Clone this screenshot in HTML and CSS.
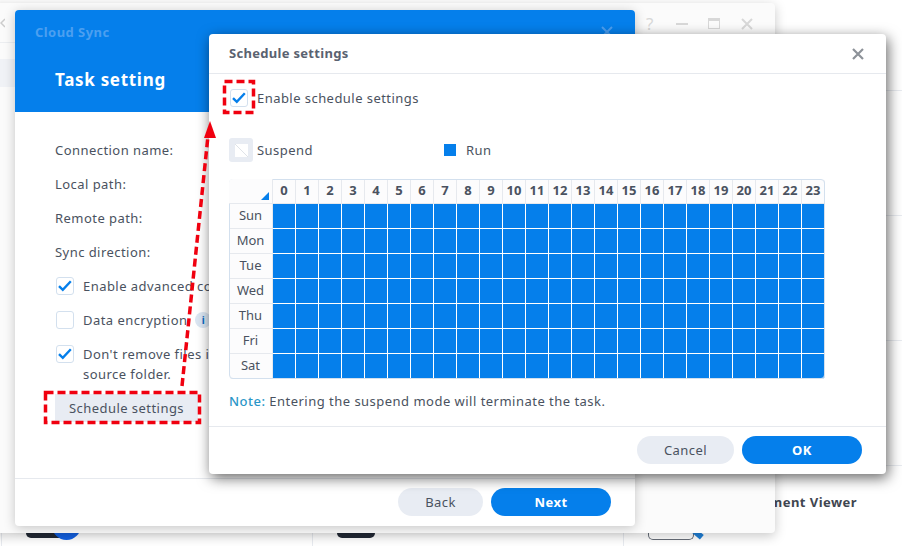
FILE: index.html
```html
<!DOCTYPE html>
<html lang="en">
<head>
    <meta charset="UTF-8">
    <title>Cloud Sync - Schedule settings</title>
    <link rel="stylesheet" href="styles.css">
</head>
<body>
    <div class="desktop">
        <div class="desk-line line-one"></div>
        <div class="desk-line line-two"></div>
        <div class="desk-line line-three"></div>
        <div class="desk-line line-four"></div>
        <div class="desk-line line-bottom"></div>
        <div class="desk-cols">
            <span></span><span></span><span></span>
        </div>
        <div class="desk-title">Document Viewer</div>
        <div class="desk-app app-one"><span class="blue-dot"></span></div>
        <div class="desk-app app-two"></div>
        <div class="desk-app app-three"></div>
        <div class="pencil"></div>

        <div class="back-window">
            <div class="back-head">
                <svg width="12" height="12" viewBox="0 0 12 12"><path d="M12 2L8 6l4 4" fill="none" stroke="#ccc" stroke-width="1.5"/></svg>
                <div class="back-tools">
                    <span class="tool-help">?</span>
                    <span class="tool-min"></span>
                    <span class="tool-max"></span>
                    <svg width="14" height="14" viewBox="0 0 14 14"><path d="M2 2l10 10M12 2L2 12" stroke="#d8d8d8" stroke-width="2"/></svg>
                </div>
            </div>
            <div class="back-row"></div>
        </div>

        <div class="task-dialog">
            <div class="task-head">
                <div class="task-title-row">
                    <span class="task-app">Cloud Sync</span>
                    <svg width="12" height="12" viewBox="0 0 12 12"><path d="M1 1l10 10M11 1L1 11" stroke="#4c9ff0" stroke-width="2"/></svg>
                </div>
                <h1>Task setting</h1>
            </div>
            <div class="task-body">
                <div class="field">Connection name:</div>
                <div class="field">Local path:</div>
                <div class="field">Remote path:</div>
                <div class="field">Sync direction:</div>
                <div class="check-row">
                    <span class="check"><svg viewBox="0 0 16 16"><path d="M2 8.2l3.8 3.7 8-8.6" fill="none" stroke="#057feb" stroke-width="2.4"/></svg></span>
                    <span>Enable advanced co</span>
                </div>
                <div class="check-row">
                    <span class="check"></span>
                    <span>Data encryption</span>
                    <span class="info">i</span>
                </div>
                <div class="check-row tall">
                    <span class="check"><svg viewBox="0 0 16 16"><path d="M2 8.2l3.8 3.7 8-8.6" fill="none" stroke="#057feb" stroke-width="2.4"/></svg></span>
                    <span class="two-lines">Don't remove files i<br>source folder.</span>
                </div>
                <button class="plain-btn" type="button">Schedule settings</button>
            </div>
            <div class="task-foot">
                <button class="pill grey" type="button">Back</button>
                <button class="pill blue" type="button">Next</button>
            </div>
        </div>

        <div class="schedule-dialog">
            <div class="schedule-head">
                <span>Schedule settings</span>
                <svg width="12" height="12" viewBox="0 0 12 12"><path d="M1 1l10 10M11 1L1 11" stroke="#8d9299" stroke-width="2.2"/></svg>
            </div>
            <div class="schedule-body">
                <div class="enable-row">
                    <span class="check"><svg viewBox="0 0 16 16"><path d="M2 8.2l3.8 3.7 8-8.6" fill="none" stroke="#057feb" stroke-width="2.4"/></svg></span>
                    <span>Enable schedule settings</span>
                </div>
                <div class="legend">
                    <div class="legend-item suspend-item">
                        <span class="suspend-icon"><svg width="13" height="13" viewBox="0 0 13 13"><rect width="13" height="13" fill="#fff"/><path d="M0 0l13 13" stroke="#dfe3e8"/></svg></span>
                        <span>Suspend</span>
                    </div>
                    <div class="legend-item">
                        <span class="run-icon"></span>
                        <span>Run</span>
                    </div>
                </div>
                <div class="week-grid">
                    <div class="corner"></div>
                    <b>0</b><b>1</b><b>2</b><b>3</b><b>4</b><b>5</b><b>6</b><b>7</b><b>8</b><b>9</b><b>10</b><b>11</b><b>12</b><b>13</b><b>14</b><b>15</b><b>16</b><b>17</b><b>18</b><b>19</b><b>20</b><b>21</b><b>22</b><b>23</b>
                    <span>Sun</span><i></i><i></i><i></i><i></i><i></i><i></i><i></i><i></i><i></i><i></i><i></i><i></i><i></i><i></i><i></i><i></i><i></i><i></i><i></i><i></i><i></i><i></i><i></i><i></i>
                    <span>Mon</span><i></i><i></i><i></i><i></i><i></i><i></i><i></i><i></i><i></i><i></i><i></i><i></i><i></i><i></i><i></i><i></i><i></i><i></i><i></i><i></i><i></i><i></i><i></i><i></i>
                    <span>Tue</span><i></i><i></i><i></i><i></i><i></i><i></i><i></i><i></i><i></i><i></i><i></i><i></i><i></i><i></i><i></i><i></i><i></i><i></i><i></i><i></i><i></i><i></i><i></i><i></i>
                    <span>Wed</span><i></i><i></i><i></i><i></i><i></i><i></i><i></i><i></i><i></i><i></i><i></i><i></i><i></i><i></i><i></i><i></i><i></i><i></i><i></i><i></i><i></i><i></i><i></i><i></i>
                    <span>Thu</span><i></i><i></i><i></i><i></i><i></i><i></i><i></i><i></i><i></i><i></i><i></i><i></i><i></i><i></i><i></i><i></i><i></i><i></i><i></i><i></i><i></i><i></i><i></i><i></i>
                    <span>Fri</span><i></i><i></i><i></i><i></i><i></i><i></i><i></i><i></i><i></i><i></i><i></i><i></i><i></i><i></i><i></i><i></i><i></i><i></i><i></i><i></i><i></i><i></i><i></i><i></i>
                    <span>Sat</span><i></i><i></i><i></i><i></i><i></i><i></i><i></i><i></i><i></i><i></i><i></i><i></i><i></i><i></i><i></i><i></i><i></i><i></i><i></i><i></i><i></i><i></i><i></i><i></i>
                </div>
                <p class="note"><span>Note:</span> Entering the suspend mode will terminate the task.</p>
            </div>
            <div class="schedule-foot">
                <button class="pill grey wide" type="button">Cancel</button>
                <button class="pill blue" type="button">OK</button>
            </div>
        </div>

        <!-- red annotation drawn over the screenshot -->
        <svg class="marks" width="902" height="546" viewBox="0 0 902 546">
            <g fill="none" stroke="#f0000f" stroke-width="3.5" stroke-dasharray="8 4">
                <rect x="45.5" y="392.5" width="154" height="30"/>
                <rect x="224.5" y="81.5" width="29" height="31"/>
                <path d="M182 386L208 136"/>
            </g>
            <path d="M210 121L216 138H204Z" fill="#f0000f"/>
        </svg>
    </div>
</body>
</html>
```
FILE: styles.css
```css
body {
    margin: 0;
    background-color: #fff;
    font-family: "Noto Sans", sans-serif;
    font-size: 13px;
    letter-spacing: 0.45px;
    color: #4a5260;
}

button {
    font-family: inherit;
    font-size: 13px;
    letter-spacing: inherit;
    border: none;
    cursor: pointer;
}

.desktop {
    position: relative;
    width: 902px;
    height: 546px;
    overflow: hidden;
}

/* things on the desktop behind the windows */
.desk-line {
    position: absolute;
    left: 780px;
    width: 122px;
    height: 1px;
    background-color: #e8ebf0;
}

.line-one {
    top: 90px;
}

.line-two {
    top: 215px;
}

.line-three {
    top: 340px;
}

.line-four {
    top: 465px;
}

.line-bottom {
    left: 0;
    top: 492px;
    width: 15px;
}

.desk-cols span {
    position: absolute;
    top: 533px;
    width: 1px;
    height: 13px;
    background-color: #e8ebf0;
}

.desk-cols span:nth-child(1) { left: 1px; }
.desk-cols span:nth-child(2) { left: 312px; }
.desk-cols span:nth-child(3) { left: 623px; }

.desk-title {
    position: absolute;
    right: 45px;
    top: 493px;
    font-weight: 700;
    white-space: nowrap;
    color: #3f4650;
}

.desk-app {
    position: absolute;
    top: 526px;
    height: 12px;
    border-radius: 0 0 5px 5px;
    background-color: #232a36;
}

.app-one {
    left: 26px;
    width: 40px;
}

.blue-dot {
    position: absolute;
    left: 26px;
    top: -10px;
    width: 29px;
    height: 24px;
    border-radius: 0 0 15px 15px;
    background-color: #1463e6;
}

.app-two {
    left: 337px;
    width: 38px;
}

.app-three {
    left: 648px;
    width: 44px;
    height: 13px;
    background-color: #fff;
    border: 1px solid #666d78;
    border-top: none;
}

.pencil {
    position: absolute;
    left: 693px;
    top: 531px;
    width: 10px;
    height: 6px;
    background-color: #1f7fd6;
    transform: rotate(40deg);
}

.back-window {
    position: absolute;
    left: -10px;
    top: 3px;
    width: 785px;
    height: 530px;
    background-color: #fbfbfb;
    border-radius: 4px;
    box-shadow: 0 3px 12px rgba(0, 0, 0, 0.22);
}

.back-head {
    display: flex;
    justify-content: space-between;
    align-items: center;
    height: 39px;
    padding: 0 21px 0 3px;
    border-bottom: 1px solid #eceef1;
}

.back-tools {
    display: flex;
    align-items: center;
    gap: 20px;
    margin-top: 2px;
}

.tool-help {
    width: 12px;
    font-size: 17px;
    line-height: 18px;
    text-align: center;
    color: #d8d8d8;
}

.tool-min {
    width: 12px;
    height: 2px;
    background-color: #d8d8d8;
}

.tool-max {
    width: 10px;
    height: 7px;
    border: 1px solid #d8d8d8;
    border-top-width: 3px;
}

.back-row {
    height: 28px;
    margin-top: 16px;
    background-color: #f0f2f6;
}

/* task wizard */
.task-dialog {
    position: absolute;
    left: 15px;
    top: 10px;
    width: 620px;
    height: 516px;
    display: flex;
    flex-direction: column;
    background-color: #fff;
    border-radius: 4px;
    box-shadow: 0 2px 12px rgba(0, 0, 0, 0.22);
}

.task-head {
    height: 102px;
    box-sizing: border-box;
    padding: 13px 20px 0;
    background-color: #057feb;
    border-radius: 4px 4px 0 0;
}

.task-title-row {
    display: flex;
    justify-content: space-between;
    align-items: flex-start;
    height: 18px;
    padding-right: 2px;
}

.task-title-row svg {
    margin-top: 3px;
}

.task-app {
    font-weight: 700;
    color: #4c9ff0;
}

.task-head h1 {
    margin: 27px 0 0 20px;
    font-size: 17px;
    line-height: 24px;
    letter-spacing: 0.7px;
    color: #fff;
}

.task-body {
    flex: 1;
    padding: 21px 40px 0;
}

.field {
    height: 34px;
    line-height: 34px;
}

.check-row {
    display: flex;
    gap: 9px;
    height: 34px;
    margin-left: 1px;
    align-items: center;
    white-space: nowrap;
}

.check-row.tall {
    height: 40px;
    margin-top: 7px;
    align-items: flex-start;
}

.check-row.tall .check {
    margin-top: 1px;
}

.two-lines {
    line-height: 20px;
}

.check {
    flex: none;
    width: 16px;
    height: 16px;
    border: 1px solid #d3e0ee;
    border-radius: 3px;
    background-color: #fff;
}

.check svg {
    display: block;
    width: 16px;
    height: 16px;
}

.info {
    width: 16px;
    height: 16px;
    margin-left: -1px;
    border-radius: 50%;
    background-color: #dbe6f2;
    color: #0b6cc4;
    font-size: 10px;
    font-weight: 700;
    line-height: 16px;
    text-align: center;
}

.plain-btn {
    display: block;
    width: 143px;
    height: 28px;
    margin-top: 10px;
    padding: 0;
    background-color: #e8ecf3;
    color: #4a5260;
}

.task-foot {
    display: flex;
    justify-content: flex-end;
    gap: 8px;
    height: 48px;
    box-sizing: border-box;
    padding: 9px 24px 0;
    border-top: 1px solid #e6e9ee;
}

.pill {
    width: 120px;
    height: 28px;
    padding: 0;
    border-radius: 14px;
}

.pill.grey {
    width: 85px;
    background-color: #e8ecf3;
    color: #4a5260;
}

.pill.grey.wide {
    width: 97px;
}

.pill.blue {
    background-color: #057feb;
    color: #fff;
    font-weight: 700;
}

/* schedule dialog */
.schedule-dialog {
    position: absolute;
    left: 209px;
    top: 34px;
    width: 677px;
    height: 440px;
    display: flex;
    flex-direction: column;
    background-color: #fff;
    border-radius: 4px;
    box-shadow: 2px 4px 14px rgba(0, 0, 0, 0.6);
}

.schedule-head {
    display: flex;
    justify-content: space-between;
    align-items: center;
    height: 39px;
    padding: 0 22px 0 20px;
    border-bottom: 1px solid #e6e9ee;
    font-weight: 700;
    letter-spacing: 0.3px;
    color: #5a6270;
}

.schedule-head span {
    margin-top: -2px;
}

.schedule-body {
    flex: 1;
    padding: 0 20px;
}

.enable-row {
    display: flex;
    align-items: center;
    gap: 9px;
    height: 18px;
    margin: 15px 0 0 1px;
}

.legend {
    display: flex;
    height: 24px;
    margin-top: 31px;
}

.legend-item {
    display: flex;
    align-items: center;
    gap: 10px;
}

.suspend-item {
    width: 215px;
    gap: 4px;
}

.suspend-icon {
    display: flex;
    align-items: center;
    justify-content: center;
    width: 24px;
    height: 24px;
    background-color: #e8ecf3;
    border-radius: 3px;
}

.run-icon {
    width: 12px;
    height: 12px;
    background-color: #057feb;
}

.week-grid {
    display: grid;
    grid-template-columns: 44px repeat(24, 23px);
    grid-template-rows: repeat(8, 25px);
    width: 596px;
    margin-top: 17px;
    box-sizing: border-box;
    outline: 1px solid #d3e0ee;
    outline-offset: -1px;
    border-radius: 4px;
    overflow: hidden;
}

.week-grid > * {
    box-sizing: border-box;
    border-right: 1px solid #e6e9ee;
    border-bottom: 1px solid #e6e9ee;
    background-color: #fcfcfd;
    text-align: center;
    line-height: 23px;
    letter-spacing: 0;
}

.week-grid b {
    color: #4a5260;
}

.week-grid i {
    background-color: #057feb;
    border-color: #fff;
}

.corner {
    position: relative;
}

.corner::after {
    content: "";
    position: absolute;
    right: 3px;
    bottom: 3px;
    border-style: solid;
    border-width: 0 0 8px 8px;
    border-color: transparent transparent #057feb transparent;
}

.note {
    margin: 12px 0 0;
    line-height: 20px;
    letter-spacing: 0.48px;
}

.note span {
    color: #2a96c8;
    font-weight: 500;
}

.schedule-foot {
    display: flex;
    justify-content: flex-end;
    gap: 8px;
    height: 48px;
    padding: 9px 24px 0;
    box-sizing: border-box;
    border-top: 1px solid #e6e9ee;
}

.marks {
    position: absolute;
    left: 0;
    top: 0;
}
```
